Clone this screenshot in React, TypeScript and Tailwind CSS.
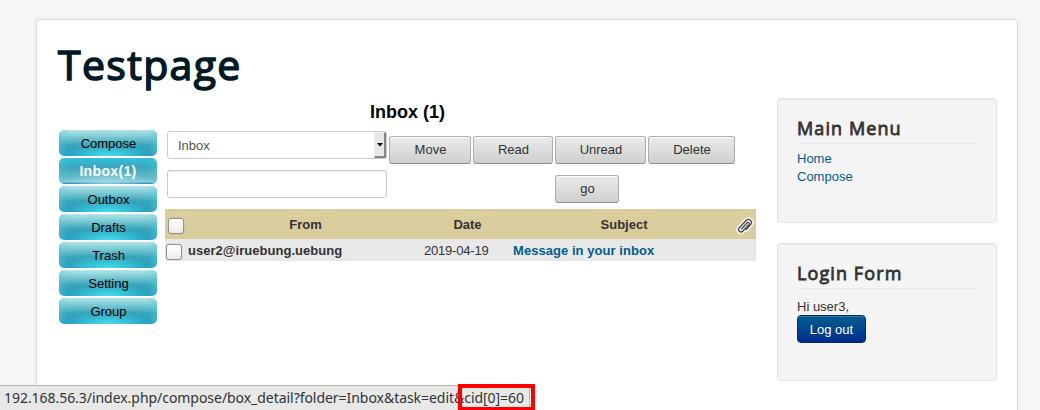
import React from "react";

const menuItems = ["Compose", "Inbox(1)", "Outbox", "Drafts", "Trash", "Setting", "Group"];

function MenuButton({ label, active }: { label: string; active: boolean }) {
  const look = active
    ? "bg-[radial-gradient(ellipse_46%_60%_at_50%_100%,rgba(170,225,232,0.7),transparent),linear-gradient(to_right,rgba(90,200,220,0.45),transparent_10%,transparent_90%,rgba(90,200,220,0.45)),linear-gradient(#30c0dc,#3aa6bc_35%,#62b8c8_75%,#8ccdd6_92%,#2292b8_97%)] text-[14px] font-bold text-white tracking-[0.35px]"
    : "bg-[radial-gradient(ellipse_44%_46%_at_50%_100%,#45dfec,transparent),linear-gradient(to_right,rgba(90,205,225,0.45),transparent_10%,transparent_90%,rgba(90,205,225,0.45)),linear-gradient(#b4e5e9,#84cfd7_22%,#38a5b9_58%,#2ba0bd_80%,#229bc4)] text-[13px] text-black";
  return (
    <a className={`flex h-[26px] w-[98px] items-center justify-center rounded-[5px] leading-[26px] ${look}`}>
      <span className={active ? "" : "pt-px pl-px"}>{label}</span>
    </a>
  );
}

function GreyButton({ label, width }: { label: string; width: string }) {
  return (
    <button
      className={`h-7 shrink-0 rounded-[3px] border border-[#aeaeac] border-b-[#8f8f8b] bg-linear-to-b from-[#ebebea] to-[#cfcfcd] pl-px text-[13px] leading-[26px] text-[#2e3436] shadow-[inset_0_1px_0_#fff] ${width}`}
    >
      {label}
    </button>
  );
}

function CheckBox() {
  return (
    <span className="block size-4 rounded-[3px] border border-[#92928e] bg-linear-to-b from-white to-[#ececeb] shadow-[0_0_1px_#999]" />
  );
}

function Well({ title, height, children }: { title: string; height: string; children: React.ReactNode }) {
  return (
    <section
      className={`rounded-[4px] border border-[#e1e1e1] bg-[#f4f4f4] px-[19px] pt-[19px] shadow-[inset_0_1px_1px_rgba(0,0,0,0.05)] ${height}`}
    >
      <h3 className="mb-[6px] h-[26px] w-[180px] border-b border-[#ebebeb] font-['Open_Sans'] text-[18px] leading-[21px] font-normal tracking-[1.1px] whitespace-nowrap text-[#333] [-webkit-text-stroke:0.8px_#333]">
        {title}
      </h3>
      {children}
    </section>
  );
}

function Paperclip() {
  const wire =
    "M6.2 11.8 11.6 5.9c1.2-1.3 3 .3 1.8 1.6l-6 6.5c-2.3 2.4-6.1-.4-3.6-3.2l6.6-7.1c2.7-2.9 7.7.3 4.8 3.9l-4.6 5";
  return (
    <svg
      width="18"
      height="17"
      viewBox="0.5 0 18 17"
      fill="none"
      strokeLinecap="round"
      strokeLinejoin="round"
      className="overflow-visible"
    >
      <path d={wire} stroke="#f3f3f1" strokeWidth="4.6" />
      <path d={wire} stroke="#484848" strokeWidth="1.3" />
    </svg>
  );
}

export default function App() {
  return (
    <div className="relative h-[410px] w-[1040px] overflow-hidden bg-[#f4f6f7] pt-[19px] pl-9 font-['Liberation_Sans',sans-serif] text-[13px] leading-[18px] text-[#333]">
      <div className="h-[420px] w-[982px] rounded-[4px] border border-[#d9d9d9] bg-white pl-5 shadow-[0_0_6px_rgba(0,0,0,0.05)]">
        <header className="h-[78px] pt-[17px] pl-px">
          <h1 className="font-['Open_Sans'] text-[41px] leading-[54px] font-normal tracking-[1.35px] text-[#001b27] [-webkit-text-stroke:1.5px_#001b27]">
            Testpage
          </h1>
        </header>

        <div className="flex">
          <nav className="flex w-[108px] flex-col gap-[2px] pt-8 pl-[2px]">
            {menuItems.map((item, i) => (
              <MenuButton key={item} label={item} active={i === 1} />
            ))}
          </nav>

          <main className="w-[591px]">
            <h2 className="h-[33px] pt-1 pr-[106px] text-center text-[18px] leading-5 font-bold text-black">
              Inbox (1)
            </h2>
            <div className="flex h-[39px] gap-[2px] pl-[2px]">
              <div className="flex h-7 w-[220px] shrink-0 justify-between rounded-[3px] border border-[#ccc] bg-white pl-[10px]">
                <span className="pt-px leading-[26px] text-[#555]">Inbox</span>
                <span className="flex h-[26px] w-3 items-center justify-center border-t border-r-2 border-b-2 border-l border-t-[#f0f0f0] border-r-[#858585] border-b-[#858585] border-l-[#f0f0f0] bg-[#e8e8e7]">
                  <svg width="6" height="4" viewBox="0 0 6 4" className="shrink-0">
                    <path d="M0 0h6L3 3.6z" fill="#000" />
                  </svg>
                </span>
              </div>
              <div className="flex gap-[2px] pt-[5px]">
                <GreyButton label="Move" width="w-[82px]" />
                <GreyButton label="Read" width="w-[80px]" />
                <GreyButton label="Unread" width="w-[91px]" />
                <GreyButton label="Delete" width="w-[87px]" />
              </div>
            </div>
            <div className="flex h-[39px] pl-[2px]">
              <input
                aria-label="Search"
                className="mr-[168px] h-7 w-[220px] shrink-0 rounded-[3px] border border-[#ccc] bg-white shadow-[inset_0_1px_1px_rgba(0,0,0,0.075)]"
              />
              <div className="pt-[5px]">
                <GreyButton label="go" width="w-16" />
              </div>
            </div>

            <div className="grid h-[30px] grid-cols-[23px_235px_89px_224px_20px] items-center bg-[#d9cd9b] text-center font-bold">
              <span className="pt-[3px] pl-[3px]">
                <CheckBox />
              </span>
              <span className="pt-[2px]">From</span>
              <span className="pt-[2px]">Date</span>
              <span className="pt-[2px]">Subject</span>
              <span className="pt-[2px]">
                <Paperclip />
              </span>
            </div>
            <div className="grid h-[22px] grid-cols-[23px_236px_89px_243px] items-center bg-[#e8e8e8]">
              <span className="pt-[3px] pl-px">
                <CheckBox />
              </span>
              <span className="pt-[2px] font-bold tracking-[0.03px]">user2@iruebung.uebung</span>
              <span className="pt-[2px] tracking-[-0.2px]">2019-04-19</span>
              <a className="pt-[2px] font-bold tracking-[0.05px] text-[#005e8d]">Message in your inbox</a>
            </div>
          </main>

          <aside className="ml-[21px] flex w-[220px] flex-col gap-5">
            <Well title="Main Menu" height="h-[125px]">
              <ul className="text-[#005e8d]">
                <li>Home</li>
                <li>Compose</li>
              </ul>
            </Well>
            <Well title="Login Form" height="h-[138px]">
              <p className="pt-[3px]">Hi user3,</p>
              <button className="-mt-px block h-7 w-[69px] rounded-[4px] border border-[#002a80] bg-linear-to-b from-[#005e8d] to-[#002a8d] pt-px text-[13px] leading-[26px] text-white shadow-[inset_0_1px_0_rgba(255,255,255,0.2)]">
                Log out
              </button>
            </Well>
          </aside>
        </div>
      </div>

      <div className="absolute top-[385px] left-0 h-[25px] w-[530px] border-t border-r border-[#b0b4b1] bg-[#e8e8e7] pl-1">
        <span className="block font-['Noto_Sans'] text-[14px] leading-6 tracking-[-0.045px] whitespace-nowrap text-[#2e3436]">
          192.168.56.3/index.php/compose/box_detail?folder=Inbox&amp;task=edit&amp;cid[0]=60
        </span>
      </div>
      <div className="absolute top-[384px] left-[458px] h-[27px] w-[77px] border-4 border-[#fe0000]" />
    </div>
  );
}
